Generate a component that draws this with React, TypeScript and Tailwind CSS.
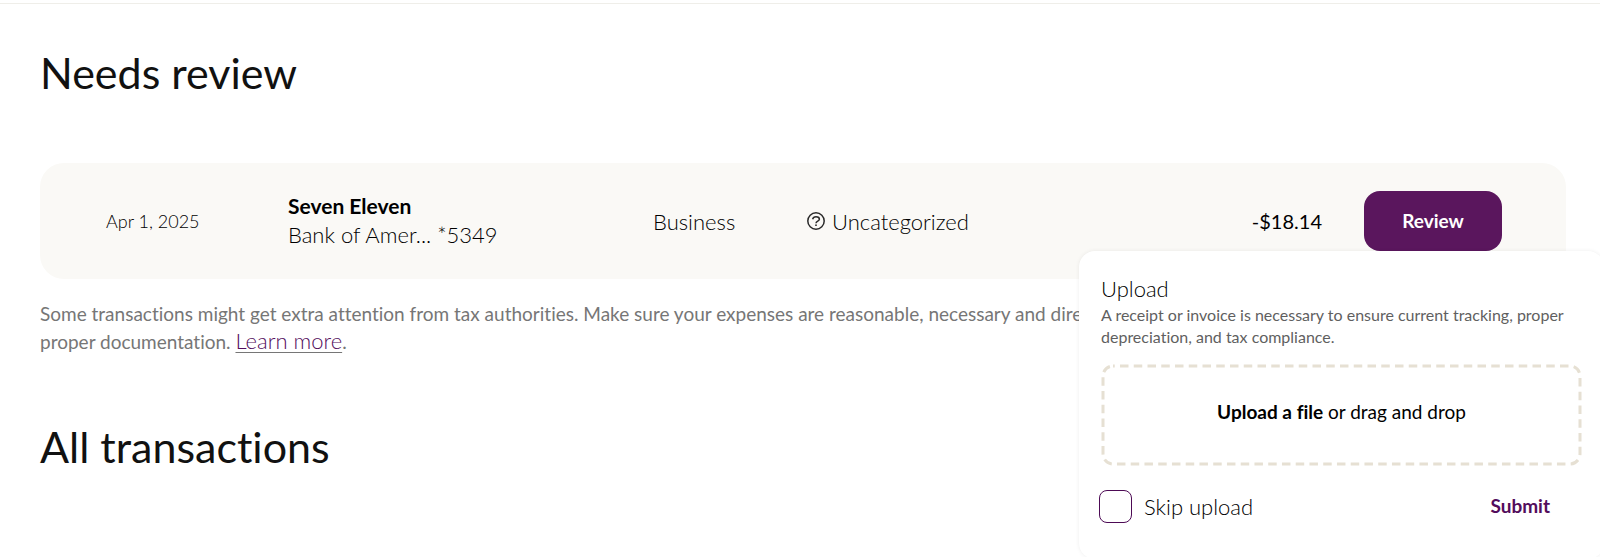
import { useState } from 'react';

const transactions = [
  {
    date: 'Apr 1, 2025',
    merchant: 'Seven Eleven',
    account: 'Bank of Amer... *5349',
    type: 'Business',
    category: 'Uncategorized',
    amount: '-$18.14',
  },
];

const QuestionIcon = () => (
  <svg width="20" height="20" viewBox="0 0 20 20" fill="none" stroke="#2b2b2b" aria-hidden="true">
    <circle cx="10" cy="10" r="8.2" strokeWidth="1.5" />
    <path d="M6.6 8.2C7 6.7 8.2 5.8 10 5.8c1.9 0 3.4 1 3.4 2.5 0 2-3.4 1.7-3.4 4" strokeWidth="1.5" />
    <circle cx="10" cy="14.2" r="0.9" fill="#2b2b2b" stroke="none" />
  </svg>
);

// long-dash outline of the drop zone; border-dashed draws its dashes too tight
const DashedOutline = () => (
  <svg className="absolute inset-0 size-full overflow-visible p-0.5" aria-hidden="true">
    <rect
      width="100%"
      height="100%"
      rx="10"
      fill="none"
      stroke="#e6e0d3"
      strokeWidth="3"
      strokeDasharray="8.5 5.25"
      strokeDashoffset="-7"
    />
  </svg>
);

const UploadPopover = () => {
  const [skip, setSkip] = useState(false);

  return (
    <div className="absolute top-full right-[-102px] w-[525px] rounded-2xl bg-white px-[22px] pt-6 pb-9 text-left shadow-[0_0_4px_rgba(0,0,0,0.07)]">
      <h3 className="text-[22px] leading-7 font-light text-black">Upload</h3>
      <p className="pt-px text-base leading-[22px] text-[#5f5f5f]">
        A receipt or invoice is necessary to ensure current tracking, proper
        depreciation, and tax compliance.
      </p>

      <button
        type="button"
        className="relative mt-4 flex h-[102px] w-full items-center justify-center pb-1.5 text-[19px] text-black"
      >
        <DashedOutline />
        <span>
          <b className="font-bold">Upload a file</b> or drag and drop
        </span>
      </button>

      <div className="mt-6 flex items-center justify-between pr-8">
        <label className="-ml-0.5 flex items-center gap-3 text-[22px] font-light text-black">
          <input
            type="checkbox"
            checked={skip}
            onChange={(e) => setSkip(e.target.checked)}
            className="size-[33px] appearance-none rounded-lg border border-[#4d0a55] bg-white checked:bg-[#5a165d]"
          />
          Skip upload
        </label>
        <button type="button" className="text-[19px] font-bold text-[#530d5c]">
          Submit
        </button>
      </div>
    </div>
  );
};

export default function App() {
  const [open, setOpen] = useState(true);

  return (
    <main className="min-h-screen overflow-hidden bg-white pt-[3px] font-[Lato,sans-serif] text-[#111] [font-variant-ligatures:none]">
      <hr className="border-[#efeee9]" />

      <div className="pr-[34px] pl-10">
        <h2 className="pt-[43px] text-[43px] leading-[52px]">Needs review</h2>

        <table className="mt-16 w-full table-fixed text-[22px] text-black">
          <tbody>
            {transactions.map((t) => (
              <tr key={t.merchant} className="h-[116px]">
                <td className="w-[248px] rounded-l-3xl bg-[#faf9f6] pl-[66px] text-lg font-light">{t.date}</td>
                <td className="w-[365px] bg-[#faf9f6] pb-0.5 leading-[29px]">
                  <div className="text-[21px] font-bold">{t.merchant}</div>
                  <div className="font-light">{t.account}</div>
                </td>
                <td className="w-[153px] bg-[#faf9f6] font-light">{t.type}</td>
                <td className="bg-[#faf9f6] font-light">
                  <span className="flex items-center gap-1.5">
                    <QuestionIcon />
                    {t.category}
                  </span>
                </td>
                <td className="w-[120px] bg-[#faf9f6] text-right text-[20px]">{t.amount}</td>
                <td className="w-[244px] rounded-r-3xl bg-[#faf9f6] pr-16">
                  <div className="relative ml-auto w-[138px]">
                    <button
                      type="button"
                      aria-expanded={open}
                      onClick={() => setOpen(!open)}
                      className="block h-[60px] w-full rounded-2xl bg-[#5a165d] text-[19px] font-bold text-white"
                    >
                      Review
                    </button>
                    {open && <UploadPopover />}
                  </div>
                </td>
              </tr>
            ))}
          </tbody>
        </table>

        <p className="mt-[21px] text-[19px] leading-7 text-[#767676]">
          Some transactions might get extra attention from tax authorities. Make sure your expenses are
          reasonable, necessary and direct,
          <br />
          proper documentation.{' '}
          <a
            href="#learn-more"
            className="text-[22px] leading-5 font-light text-[#530d5c] underline decoration-[#767676] decoration-1 underline-offset-3"
          >
            Learn more
          </a>
          .
        </p>

        <h2 className="mt-[65px] text-[43px] leading-[52px]">All transactions</h2>
      </div>
    </main>
  );
}
